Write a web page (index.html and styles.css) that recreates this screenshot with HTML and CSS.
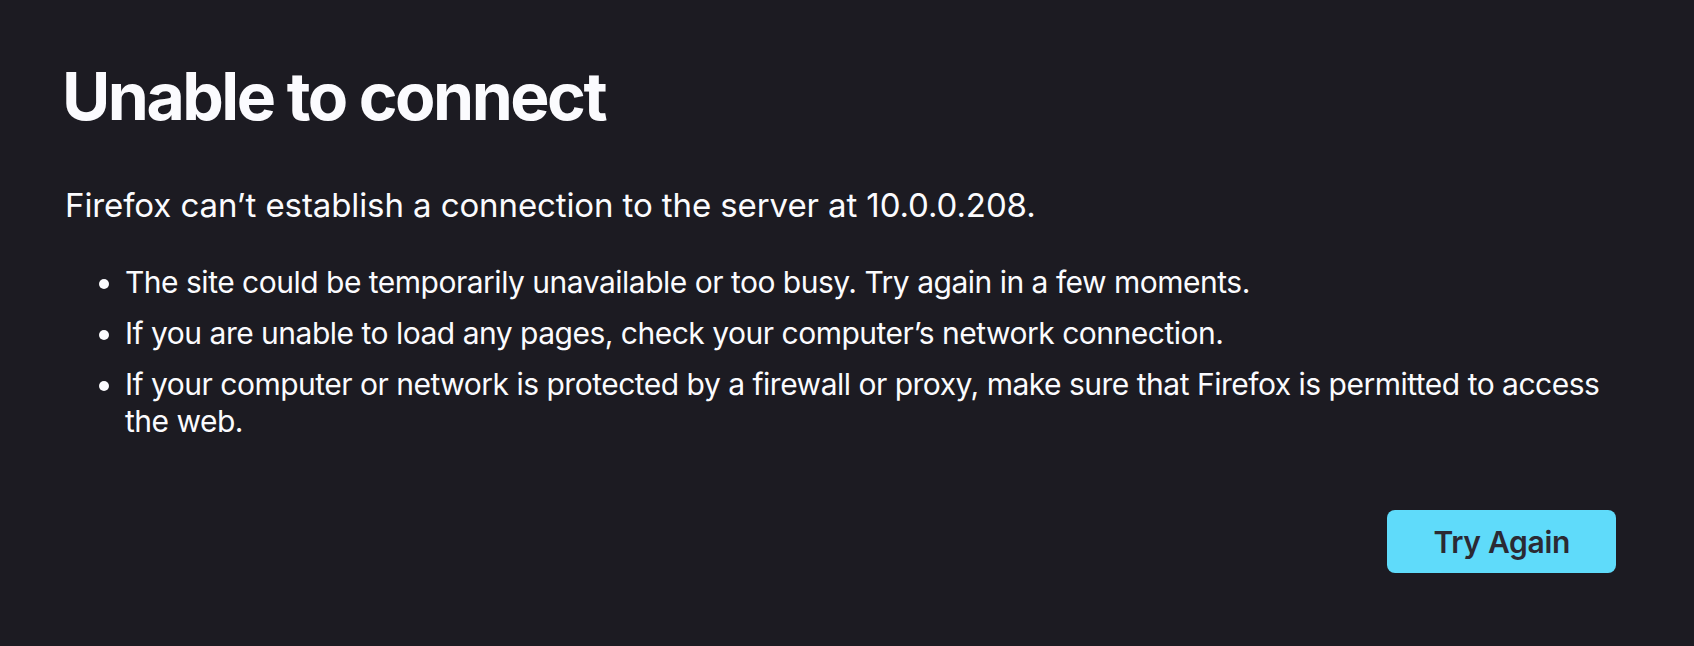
FILE: index.html
```html
<!DOCTYPE html>
<html lang="en">
<head>
  <meta charset="UTF-8">
  <meta name="viewport" content="width=device-width, initial-scale=1.0">
  <title>Problem loading page</title>
  <link rel="stylesheet" href="styles.css">
</head>
<body>
<div class="container">
  <h1 class="title">Unable to connect</h1>
  <p class="description">Firefox can’t establish a connection to the server at 10.0.0.208.</p>

  <ul class="advice">
    <li>The site could be temporarily unavailable or too busy. Try again in a few moments.</li>
    <li>If you are unable to load any pages, check your computer’s network connection.</li>
    <li>If your computer or network is protected by a firewall or proxy, make sure that Firefox is permitted to access the web.</li>
  </ul>

  <div class="button-container">
    <button id="tryAgain">Try Again</button>
  </div>
</div>
</body>
</html>
```

FILE: styles.css
```css
body {
  margin: 0;
  background: #1c1b22;
  color: #fbfbfe;
  font-family: Inter, "Noto Sans", sans-serif;
}
.container {
  width: 1551px;
  padding: 56px 0 0 65px;
}
.title {
  margin: 0 0 0 -3px;
  font-size: 66px;
  line-height: 80px;
  font-weight: 700;
  letter-spacing: -2.5px;
}
.description {
  margin: 49px 0 0;
  font-size: 33px;
  line-height: 40px;
  letter-spacing: -0.1px;
}
.advice {
  margin: 39px 0 0;
  padding-left: 60px;
  font-size: 30px;
  line-height: 37px;
  letter-spacing: -0.5px;
}
.advice li {
  margin-bottom: 14px;
}
.advice li:last-child {
  margin-bottom: 0;
}
.button-container {
  display: flex;
  justify-content: flex-end;
  margin-top: 70px;
}
button {
  height: 63px;
  padding: 0 46px;
  border: none;
  border-radius: 8px;
  background: #5fdbfa;
  color: #2b2a33;
  font-family: inherit;
  font-size: 30px;
  font-weight: 600;
  letter-spacing: -0.3px;
  cursor: pointer;
}
```
